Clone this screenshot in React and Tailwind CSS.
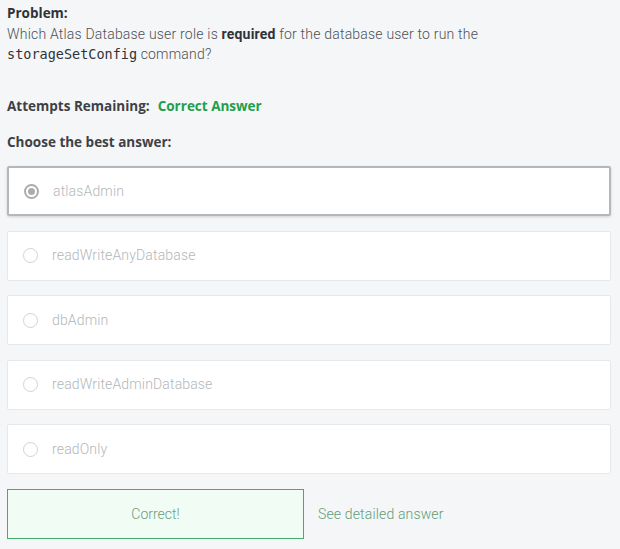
import React from 'react';

const options = ['atlasAdmin', 'readWriteAnyDatabase', 'dbAdmin', 'readWriteAdminDatabase', 'readOnly'];

function Radio({ checked }) {
  return (
    <span
      className={`flex h-[15px] w-[15px] shrink-0 items-center justify-center rounded-full border ${
        checked ? 'border-[#a9adb1] border-2' : 'border-[#cfd3d6]'
      }`}
    >
      {checked && <span className="h-[7px] w-[7px] rounded-full bg-[#a9adb1]" />}
    </span>
  );
}

const heading = { fontFamily: '"Open Sans", "Liberation Sans", sans-serif' };

export default function App() {
  return (
    <div className="min-h-[549px] w-[620px] bg-[#f5f6f7] px-[7px] pt-[3px] text-[#3d4146]" style={{ fontFamily: 'Roboto, "Liberation Sans", sans-serif' }}>
      <div style={heading} className="text-[13.5px] font-bold leading-[20px] text-[#2f3338]">
        Problem:
      </div>
      <p className="mt-[1px] text-[14px] font-light leading-[20px] tracking-[0.2px] text-[#4c5157]">
        Which Atlas Database user role is <b className="font-bold text-[#2f3338]">required</b> for the database user to run the
        <br />
        <code className="text-[13.5px] tracking-normal text-[#2f3338]" style={{ fontFamily: '"DejaVu Sans Mono", monospace' }}>storageSetConfig</code> command?
      </p>

      <div style={heading} className="mt-[32px] flex gap-[8px] text-[13.5px] font-bold leading-[20px] text-[#3d4146]">
        <span>Attempts Remaining:</span>
        <span className="text-[#1f9f4d]">Correct Answer</span>
      </div>
      <div style={heading} className="mt-[16px] text-[13.5px] font-bold leading-[20px] text-[#3d4146]">
        Choose the best answer:
      </div>

      <div className="mt-[14px] flex w-[604px] flex-col gap-[14.5px]">
        {options.map((opt, i) => (
          <div
            key={opt}
            className={`flex h-[50px] items-center gap-[14px] rounded-[2px] bg-white pl-[15px] ${
              i === 0
                ? 'border-2 border-[#b5b8bb] shadow-[0_1px_3px_rgba(0,0,0,0.15)]'
                : 'border border-[#e6e8ea]'
            }`}
          >
            <Radio checked={i === 0} />
            <span className="text-[14px] font-light tracking-[0.15px] text-[#b3b7ba]">{opt}</span>
          </div>
        ))}
      </div>

      <div className="mt-[15px] flex items-center gap-[14px]">
        <div className="flex h-[50px] w-[297px] items-center justify-center border border-[#43ad6e] bg-[#f0fcf4] text-[14px] font-light text-[#6c9c80]">
          Correct!
        </div>
        <span className="text-[14px] font-light tracking-[0.15px] text-[#5f9d78]">See detailed answer</span>
      </div>
    </div>
  );
}
